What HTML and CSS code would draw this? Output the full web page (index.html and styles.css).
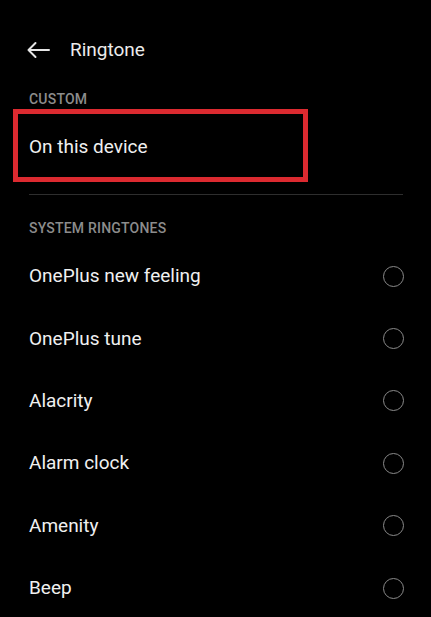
FILE: index.html
```html
<!DOCTYPE html>
<html lang="en">
<head>
<meta charset="utf-8">
<title>Ringtone</title>
<link rel="stylesheet" href="styles.css">
</head>
<body>
<div class="screen">
  <header class="toolbar">
    <svg class="back" width="24" height="24" viewBox="0 0 24 24" aria-hidden="true">
      <path d="M23 12H2.5M9.5 5L2.5 12L9.5 19" fill="none" stroke="#e6e6e6" stroke-width="2" stroke-linecap="round" stroke-linejoin="round"/>
    </svg>
    <h1 class="title">Ringtone</h1>
  </header>

  <div class="section-label first">CUSTOM</div>
  <div class="custom-row highlight">On this device</div>

  <div class="divider"></div>

  <div class="section-label second">SYSTEM RINGTONES</div>
  <ul class="list">
    <li class="item"><span class="name">OnePlus new feeling</span><span class="radio"></span></li>
    <li class="item"><span class="name">OnePlus tune</span><span class="radio"></span></li>
    <li class="item"><span class="name">Alacrity</span><span class="radio"></span></li>
    <li class="item"><span class="name">Alarm clock</span><span class="radio"></span></li>
    <li class="item"><span class="name">Amenity</span><span class="radio"></span></li>
    <li class="item"><span class="name">Beep</span><span class="radio"></span></li>
  </ul>
</div>
</body>
</html>
```
FILE: styles.css
```css
html, body {
  margin: 0;
  padding: 0;
  background: #000;
}
body {
  font-family: Roboto, "Noto Sans", "Liberation Sans", sans-serif;
  color: #f0f0f0;
  width: 431px;
  height: 617px;
  overflow: hidden;
}
.screen {
  display: flex;
  flex-direction: column;
}
.toolbar {
  display: flex;
  align-items: center;
  height: 56px;
  margin-top: 22px;
  padding-left: 26px;
}
.back {
  display: block;
  flex: none;
}
.title {
  margin: 0 0 0 20px;
  font-size: 19px;
  line-height: 24px;
  font-weight: 400;
  color: #ebebeb;
}
.section-label {
  font-size: 14px;
  line-height: 20px;
  font-weight: 500;
  letter-spacing: 0.2px;
  color: #8c8c8c;
  padding-left: 29px;
}
.section-label.first {
  margin-top: 11px;
}
.section-label.second {
  margin-top: 23px;
}
.custom-row {
  display: flex;
  align-items: center;
  box-sizing: border-box;
  height: 73px;
  width: 295px;
  margin-left: 13px;
  padding: 3px 0 0 11px;
  font-size: 19px;
  line-height: 24px;
  color: #f0f0f0;
}
.highlight {
  border: 5px solid #dc2a30;
}
.divider {
  height: 1px;
  background: #2e2e2e;
  margin: 12px 28px 0 29px;
}
.list {
  list-style: none;
  margin: 7px 0 0 0;
  padding: 0;
}
.item {
  display: flex;
  align-items: center;
  justify-content: space-between;
  height: 62.4px;
  padding: 0 27px 0 29px;
  font-size: 19px;
  line-height: 24px;
  color: #f0f0f0;
}
.radio {
  box-sizing: border-box;
  width: 21px;
  height: 21px;
  border: 1.5px solid #8a8a8a;
  border-radius: 50%;
  flex: none;
}
```
